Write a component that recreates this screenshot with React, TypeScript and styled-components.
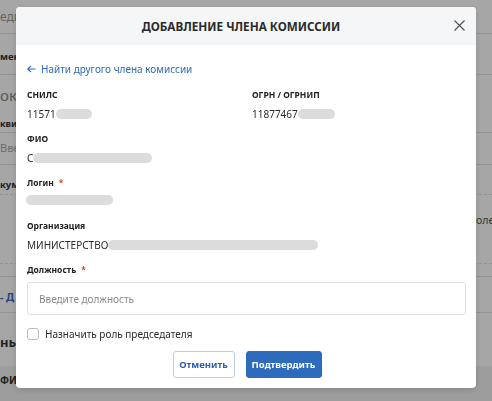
import React from "react";
import styled, { createGlobalStyle } from "styled-components";

const Global = createGlobalStyle`
  html, body { margin: 0; padding: 0; }
  body { font-family: "Noto Sans", "Open Sans", Arial, sans-serif; background: #fff; width: 492px; height: 401px; overflow: hidden; }
  * { box-sizing: border-box; }
`;

/* ---------- background page ---------- */
const Page = styled.div`
  width: 492px;
  height: 401px;
  display: flex;
  flex-direction: column;
  overflow: hidden;
  background: #fff;
`;

const BgRow = styled.div<{ $h: number; $line?: "solid" | "dashed" | "none"; $band?: boolean }>`
  height: ${(p) => p.$h}px;
  flex: none;
  display: flex;
  flex-direction: column;
  justify-content: space-between;
  border-bottom: ${(p) => (p.$line === "none" || !p.$line ? "none" : `1px ${p.$line} #e2e2e2`)};
  background: ${(p) => (p.$band ? "#f1f1f1" : "transparent")};
`;

const BgLine = styled.div<{ $top: number }>`
  display: flex;
  justify-content: space-between;
  margin-top: ${(p) => p.$top}px;
  white-space: nowrap;
`;

const BgCell = styled.div`
  width: 16px;
  overflow: hidden;
  display: flex;
  justify-content: flex-start;
`;

const BgText = styled.span<{ $size: number; $bold?: boolean; $color?: string }>`
  font-size: ${(p) => p.$size}px;
  line-height: 16px;
  font-weight: ${(p) => (p.$bold ? 700 : 400)};
  color: ${(p) => p.$color || "#333"};
`;

/* ---------- modal ---------- */
const Overlay = styled.div`
  position: fixed;
  inset: 0;
  background: rgba(0, 0, 0, 0.35);
  display: flex;
  justify-content: center;
  align-items: flex-start;
  padding-top: 7px;
`;

const Modal = styled.div`
  width: 460px;
  background: #fff;
  border-radius: 4px;
  overflow: hidden;
  box-shadow: 0 2px 6px rgba(0, 0, 0, 0.15);
  display: flex;
  flex-direction: column;
`;

const Header = styled.div`
  height: 38px;
  background: #f5f6f8;
  display: flex;
  align-items: center;
  justify-content: center;
  position: relative;
`;

const Title = styled.h2`
  margin: 0 10px 0 0;
  font-size: 11.7px;
  font-weight: 700;
  color: #2b2b2b;
  line-height: 16px;
`;

const CloseButton = styled.button`
  position: absolute;
  right: 11px;
  top: 12px;
  width: 12px;
  height: 12px;
  padding: 0;
  border: none;
  background: none;
  display: flex;
  align-items: center;
  justify-content: center;
  cursor: pointer;
`;

const Body = styled.div`
  padding: 17px 10px 10px 11px;
  display: flex;
  flex-direction: column;
`;

const BackLink = styled.a`
  display: flex;
  align-items: center;
  gap: 5px;
  font-size: 10px;
  line-height: 14px;
  color: #2f6ab8;
  text-decoration: none;
  margin-bottom: 12px;
`;

const Grid = styled.div`
  display: grid;
  grid-template-columns: 225px 1fr;
  row-gap: 12px;
`;

const Field = styled.div<{ $full?: boolean; $mt?: number }>`
  grid-column: ${(p) => (p.$full ? "1 / -1" : "auto")};
  display: flex;
  flex-direction: column;
  margin-top: ${(p) => p.$mt ?? 0}px;
`;

const Label = styled.div<{ $gap?: number }>`
  font-size: 8.5px;
  line-height: 12px;
  font-weight: 700;
  color: #222;
  margin-bottom: ${(p) => p.$gap ?? 6}px;
  white-space: nowrap;
`;

const Req = styled.span`
  color: #d9482b;
  margin-left: 5px;
`;

const Value = styled.div`
  font-size: 10px;
  line-height: 14px;
  color: #2b2b2b;
  display: flex;
  align-items: center;
  white-space: nowrap;
`;

const Blur = styled.span<{ $w: number; $ml?: number }>`
  display: inline-block;
  width: ${(p) => p.$w}px;
  height: 10px;
  border-radius: 5px;
  background: #dcdcdc;
  margin-left: ${(p) => p.$ml ?? 0}px;
`;

const Input = styled.input`
  margin-top: 6px;
  height: 33px;
  width: 100%;
  border: 1px solid #dfe1e5;
  border-radius: 3px;
  padding: 0 11px;
  font-family: inherit;
  font-size: 10px;
  color: #333;
  outline: none;
  &::placeholder { color: #8a8a8a; }
`;

const CheckRow = styled.label`
  margin-top: 13px;
  display: flex;
  align-items: center;
  gap: 6px;
  font-size: 10px;
  line-height: 12px;
  color: #2b2b2b;
`;

const Box = styled.span`
  width: 12px;
  height: 12px;
  border: 1px solid #b9bec6;
  border-radius: 3px;
  background: #fff;
  flex: none;
`;

const Actions = styled.div`
  margin-top: 11px;
  display: flex;
  justify-content: center;
  gap: 11px;
  padding-left: 1px;
`;

const Btn = styled.button<{ $primary?: boolean; $w: number }>`
  width: ${(p) => p.$w}px;
  height: 27px;
  border-radius: 3px;
  font-family: inherit;
  font-size: 9.5px;
  font-weight: 700;
  border: 1px solid ${(p) => (p.$primary ? "#2d6bbd" : "#b8cdea")};
  background: ${(p) => (p.$primary ? "#2d6bbd" : "#fff")};
  color: ${(p) => (p.$primary ? "#fff" : "#2d5ea8")};
  padding: 0;
  cursor: pointer;
`;

export default function App() {
  return (
    <>
      <Global />
      <Page>
        <BgRow $h={34} $line="solid">
          <BgLine $top={9}>
            <BgCell><BgText $size={12} $color="#9a9a9a">еди</BgText></BgCell>
          </BgLine>
        </BgRow>
        <BgRow $h={41} $line="solid">
          <BgLine $top={15}>
            <BgCell><BgText $size={9.5} $bold>мен</BgText></BgCell>
          </BgLine>
        </BgRow>
        <BgRow $h={58} $line="solid">
          <BgLine $top={12}>
            <BgCell><BgText $size={15} $color="#888">оку</BgText></BgCell>
          </BgLine>
          <BgLine $top={0}>
            <BgCell><BgText $size={9} $bold>кви</BgText></BgCell>
          </BgLine>
        </BgRow>
        <BgRow $h={32} $line="solid">
          <BgLine $top={7}>
            <BgCell><BgText $size={11} $color="#aaa">Вве</BgText></BgCell>
          </BgLine>
        </BgRow>
        <BgRow $h={30} $line="dashed">
          <BgLine $top={12}>
            <BgCell><BgText $size={9.5} $bold>кум</BgText></BgCell>
          </BgLine>
        </BgRow>
        <BgRow $h={69} $line="dashed">
          <BgLine $top={17}>
            <BgCell />
            <BgCell><BgText $size={10.5} $color="#555">оле</BgText></BgCell>
          </BgLine>
        </BgRow>
        <BgRow $h={13} $line="solid" />
        <BgRow $h={36} $line="solid">
          <BgLine $top={12}>
            <BgCell><BgText $size={10.5} $bold $color="#2f6ab8">- Д</BgText></BgCell>
          </BgLine>
        </BgRow>
        <BgRow $h={53}>
          <BgLine $top={21}>
            <BgCell><BgText $size={13} $bold>ны</BgText></BgCell>
          </BgLine>
        </BgRow>
        <BgRow $h={40} $band>
          <BgLine $top={6}>
            <BgCell><BgText $size={10} $bold>ФИ</BgText></BgCell>
          </BgLine>
        </BgRow>
      </Page>

      <Overlay>
        <Modal>
          <Header>
            <Title>ДОБАВЛЕНИЕ ЧЛЕНА КОМИССИИ</Title>
            <CloseButton aria-label="Закрыть">
              <svg width="11" height="11" viewBox="0 0 11 11">
                <path d="M0.5 0.5 L10.5 10.5 M10.5 0.5 L0.5 10.5" stroke="#555" strokeWidth="1.2" fill="none" />
              </svg>
            </CloseButton>
          </Header>
          <Body>
            <BackLink href="#">
              <svg width="9" height="8" viewBox="0 0 9 8">
                <path d="M8.5 4 H1 M4 0.8 L0.8 4 L4 7.2" stroke="#2f6ab8" strokeWidth="1.1" fill="none" />
              </svg>
              Найти другого члена комиссии
            </BackLink>
            <Grid>
              <Field $mt={1}>
                <Label>СНИЛС</Label>
                <Value>
                  11571
                  <Blur $w={36} />
                </Value>
              </Field>
              <Field $mt={1}>
                <Label>ОГРН / ОГРНИП</Label>
                <Value>
                  11877467
                  <Blur $w={37} />
                </Value>
              </Field>
              <Field $full>
                <Label>ФИО</Label>
                <Value>
                  С<Blur $w={119} />
                </Value>
              </Field>
              <Field $full>
                <Label $gap={6}>
                  Логин<Req>*</Req>
                </Label>
                <Value>
                  <Blur $w={87} $ml={-1} />
                </Value>
              </Field>
              <Field $full $mt={3}>
                <Label $gap={6}>Организация</Label>
                <Value>
                  МИНИСТЕРСТВО
                  <Blur $w={210} />
                </Value>
              </Field>
            </Grid>
            <Field $mt={12}>
              <Label $gap={0}>
                Должность<Req>*</Req>
              </Label>
              <Input placeholder="Введите должность" />
            </Field>
            <CheckRow>
              <Box />
              Назначить роль председателя
            </CheckRow>
            <Actions>
              <Btn $w={62}>Отменить</Btn>
              <Btn $w={76} $primary>
                Подтвердить
              </Btn>
            </Actions>
          </Body>
        </Modal>
      </Overlay>
    </>
  );
}
